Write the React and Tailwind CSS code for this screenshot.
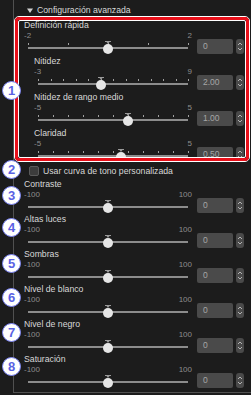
import React from 'react';

const inner = [
  { label: 'Definición rápida', min: -2, max: 2, value: 0, display: '0', ticks: 5 },
  { label: 'Nitidez', min: -3, max: 9, value: 2, display: '2.00', ticks: 13, indent: true },
  { label: 'Nitidez de rango medio', min: -5, max: 5, value: 1, display: '1.00', ticks: 11, indent: true },
  { label: 'Claridad', min: -5, max: 5, value: 0.5, display: '0.50', ticks: 11, indent: true },
];

const outer = [
  'Contraste',
  'Altas luces',
  'Sombras',
  'Nivel de blanco',
  'Nivel de negro',
  'Saturación',
];

// annotation badges: [number, top]
const badges = [
  [1, 81],
  [2, 160],
  [3, 186],
  [4, 218],
  [5, 254],
  [6, 288],
  [7, 323],
  [8, 357],
];

function Spinner() {
  return (
    <div className="flex h-[15px] w-[8px] items-center justify-center rounded-[3px] bg-[#4a4a4a]">
      <svg width="6" height="11" viewBox="0 0 6 11">
        <path d="M1 4 L3 2 L5 4" stroke="#b4b4b4" strokeWidth="1" fill="none" />
        <path d="M1 7 L3 9 L5 7" stroke="#b4b4b4" strokeWidth="1" fill="none" />
      </svg>
    </div>
  );
}

function SliderRow({ label, min, max, value, display, ticks, indent, tall }) {
  const pct = ((value - min) / (max - min)) * 100;
  return (
    <div className={`${indent ? 'pl-[20px]' : 'pl-[10px]'} ${tall ? 'h-[36px]' : 'h-[35px]'} pr-[7px]`}>
      <div className="h-[11px] text-[8.7px] leading-[11px] text-[#d8d8d8] whitespace-nowrap">{label}</div>
      <div className="flex">
        <div className="flex-1">
          <div className="flex h-[10px] justify-between text-[8px] leading-[10px] text-[#8e8e8e]">
            <span>{min}</span>
            <span>{max}</span>
          </div>
          <div className="relative mx-[4px] h-[14px]">
            {ticks &&
              Array.from({ length: ticks }).map((_, i) => (
                <span
                  key={i}
                  className="absolute top-[2px] h-[2px] w-[1px] bg-[#a0a0a0]"
                  style={{ left: `${(i / (ticks - 1)) * 100}%` }}
                />
              ))}
            <div className="absolute left-0 right-0 top-[6px] h-[2px] bg-[#8c8c8c]" />
            <div
              className="absolute top-0 flex -translate-x-1/2 flex-col items-center"
              style={{ left: `${pct}%` }}
            >
              <svg width="6" height="3" viewBox="0 0 6 3">
                <path d="M0 0.5 H6" stroke="#9a9a9a" strokeWidth="1" />
                <path d="M1.5 1 L4.5 1 L3 3 Z" fill="#9a9a9a" />
              </svg>
              <div className="h-[10px] w-[10px] rounded-full bg-[#e6e6e6]" />
            </div>
          </div>
        </div>
        <div className="ml-[5px] mt-[8px] flex gap-[3px]">
          <div className="h-[15px] w-[36px] rounded-[2px] bg-[#4a4a4a] pl-[6px] text-[8.5px] leading-[15px] text-[#a6a6a6]">
            {display}
          </div>
          <Spinner />
        </div>
      </div>
    </div>
  );
}

export default function App() {
  return (
    <div
      className="relative h-[395px] w-[251px] overflow-hidden bg-[#1c1c1c]"
      style={{ fontFamily: '"Liberation Sans", Arial, sans-serif' }}
    >
      <div className="ml-[13px] h-[393px] border-b border-l border-[#505050]">
        {/* header */}
        <div className="flex h-[17px] items-start gap-[4px] pl-[13px] pt-[5px]">
          <svg width="6" height="11" viewBox="0 0 6 11" className="shrink-0">
            <path d="M0 3.5 H6 L3 8 Z" fill="#d0d0d0" />
          </svg>
          <span className="text-[8.7px] leading-[11px] text-[#dadada]">Configuración avanzada</span>
        </div>

        {/* scrolling group */}
        <div className="h-[143px] overflow-hidden pt-[3px]">
          {inner.map((r) => (
            <SliderRow key={r.label} {...r} tall />
          ))}
        </div>

        {/* checkbox */}
        <div className="flex h-[19px] items-start gap-[4px] pl-[15px] pt-[6px]">
          <div className="h-[10px] w-[10px] rounded-[2px] border border-[#5a5a5a] bg-[#3c3c3c]" />
          <span className="text-[8.7px] leading-[10px] text-[#d8d8d8] whitespace-nowrap">
            Usar curva de tono personalizada
          </span>
        </div>

        {outer.map((l) => (
          <SliderRow key={l} label={l} min={-100} max={100} value={0} display="0" />
        ))}
      </div>

      {/* red annotation frame */}
      <div className="absolute left-[14px] top-[16px] h-[146px] w-[236px] rounded-[5px] border border-white">
        <div className="h-full w-full rounded-[4px] border-[3px] border-[#e8101a]">
          <div className="h-full w-full rounded-[2px] border border-white" />
        </div>
      </div>

      {badges.map(([n, top]) => (
        <div
          key={n}
          className="absolute left-[2px] flex h-[19px] w-[19px] items-center justify-center rounded-full border-[1.5px] border-[#7c84f2] bg-white text-[13px] font-bold leading-none text-[#5a62e4]"
          style={{ top }}
        >
          {n}
        </div>
      ))}
    </div>
  );
}
